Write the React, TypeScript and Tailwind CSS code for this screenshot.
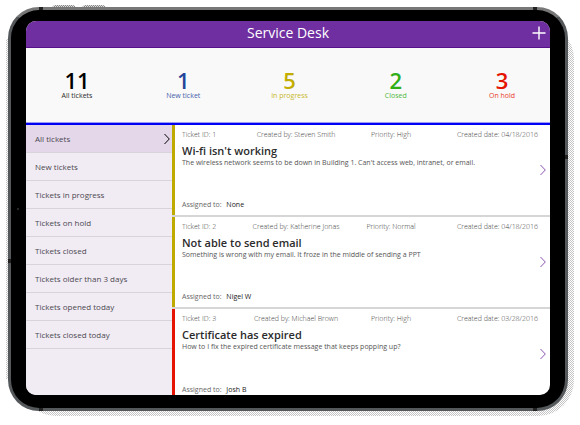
import React from 'react';

interface Stat {
  count: number;
  label: string;
  color: string;
}

interface Ticket {
  id: number;
  createdBy: string;
  priority: string;
  date: string;
  title: string;
  description: string;
  assignedTo: string;
  bar: string;
}

const stats: Stat[] = [
  { count: 11, label: 'All tickets', color: 'text-black' },
  { count: 1, label: 'New ticket', color: 'text-[#25459a]' },
  { count: 5, label: 'In progress', color: 'text-[#c2ad00]' },
  { count: 2, label: 'Closed', color: 'text-[#2fae16]' },
  { count: 3, label: 'On hold', color: 'text-[#e51400]' },
];

const filters = [
  'All tickets',
  'New tickets',
  'Tickets in progress',
  'Tickets on hold',
  'Tickets closed',
  'Tickets older than 3 days',
  'Tickets opened today',
  'Tickets closed today',
];

const tickets: Ticket[] = [
  {
    id: 1,
    createdBy: 'Steven Smith',
    priority: 'High',
    date: '04/18/2016',
    title: "Wi-fi isn't working",
    description: "The wireless network seems to be down in Building 1. Can't access web, intranet, or email.",
    assignedTo: 'None',
    bar: 'bg-[#bfab00]',
  },
  {
    id: 2,
    createdBy: 'Katherine Jonas',
    priority: 'Normal',
    date: '04/18/2016',
    title: 'Not able to send email',
    description: 'Something is wrong with my email. It froze in the middle of sending a PPT',
    assignedTo: 'Nigel W',
    bar: 'bg-[#bfab00]',
  },
  {
    id: 3,
    createdBy: 'Michael Brown',
    priority: 'High',
    date: '03/28/2016',
    title: 'Certificate has expired',
    description: 'How to I fix the expired certificate message that keeps popping up?',
    assignedTo: 'Josh B',
    bar: 'bg-[#e51400]',
  },
];

const Chevron: React.FC<{ className?: string }> = ({ className }) => (
  <svg viewBox="0 0 6 12" fill="none" stroke="currentColor" className={className} aria-hidden="true">
    <path d="M0.5 1 L5.3 6 L0.5 11" />
  </svg>
);

const Header: React.FC = () => (
  <header className="grid grid-cols-[1fr_auto_1fr] items-center h-[27px] shrink-0 pb-[3px] border-b border-[#57108c] bg-[#6f2fa0] text-white">
    <h1 className="col-start-2 text-[14px] leading-[20px]">Service Desk</h1>
    <button type="button" aria-label="New ticket" className="justify-self-end mr-1">
      <svg viewBox="0 0 14 14" fill="none" stroke="currentColor" className="block w-[14px] h-[14px]">
        <path d="M7 0.5 V13.5 M0.5 7 H13.5" strokeWidth="1.4" />
      </svg>
    </button>
  </header>
);

const Stats: React.FC = () => (
  <section className="flex justify-between items-start h-[74px] shrink-0 pt-5 pl-[3px] bg-[#f9f9f9]">
    {stats.map((stat) => (
      <div key={stat.label} className={`w-24 text-center ${stat.color}`}>
        <div className="text-[22px] leading-[24px] font-semibold">{stat.count}</div>
        <div className="text-[7px] leading-[8px] opacity-85">{stat.label}</div>
      </div>
    ))}
  </section>
);

const Sidebar: React.FC = () => (
  <nav className="w-[146px] shrink-0 bg-[#f1ecf4]">
    {filters.map((filter, i) => (
      <button
        key={filter}
        type="button"
        className={`flex w-full h-7 items-center justify-between pl-[9px] pr-[2px] border-b border-[#d6d3d9] text-[8px] leading-[12px] text-[#4c4850] ${
          i === 0 ? 'bg-[#e4d7ea]' : ''
        }`}
      >
        {filter}
        {i === 0 && <Chevron className="w-[6px] h-[12px] text-black" />}
      </button>
    ))}
  </nav>
);

const TicketRow: React.FC<{ ticket: Ticket }> = ({ ticket }) => (
  <li className="flex h-[92px] last:h-[93px] border-b-2 border-[#d6d6d6]">
    <div className={`w-[3px] shrink-0 ${ticket.bar}`} />
    <article className="relative flex flex-1 flex-col pt-[5px] pl-[7px] pr-3">
      <div className="grid grid-cols-[64fr_100fr_90fr_102fr] text-[7px] leading-[10px] font-light text-[#444] whitespace-nowrap">
        <span>Ticket ID: {ticket.id}</span>
        <span className="text-center">Created by: {ticket.createdBy}</span>
        <span className="text-center">Priority: {ticket.priority}</span>
        <span className="text-right">Created date: {ticket.date}</span>
      </div>
      <h2 className="mt-[3px] text-[11px] leading-[16px] font-semibold text-[#2b2b2b]">{ticket.title}</h2>
      <p className="text-[7px] leading-[8px] text-[#555]">{ticket.description}</p>
      <p className="mt-auto mb-[5px] text-[7px] leading-[10px] text-[#666]">
        Assigned to: <span className="ml-[3px] font-medium text-[#222]">{ticket.assignedTo}</span>
      </p>
      <button type="button" aria-label={`Open ticket ${ticket.id}`} className="absolute right-1 top-[39px]">
        <Chevron className="block w-[6px] h-[12px] text-[#8a55b5]" />
      </button>
    </article>
  </li>
);

const App: React.FC = () => (
  <div className="bg-white pt-[7px] pl-2 pr-3 pb-[14px] font-['Open_Sans','Noto_Sans',sans-serif]">
    <div className="relative">
      {/* Dotted shadow and side buttons of the tablet */}
      <div className="absolute top-4 -bottom-[5px] left-3 -right-[6px] rounded-[36px] bg-[repeating-conic-gradient(#c4c4c4_0_25%,#fff_0_50%)] bg-[size:2px_2px]" />
      <div className="absolute top-8 bottom-8 -left-[2px] w-2 bg-[repeating-conic-gradient(#c4c4c4_0_25%,#fff_0_50%)] bg-[size:2px_2px]" />
      <div className="absolute -top-[2px] left-11 w-6 h-1 rounded-t bg-[repeating-conic-gradient(#888_0_25%,#ddd_0_50%)] bg-[size:2px_2px]" />
      <div className="absolute -top-[2px] left-[74px] w-6 h-1 rounded-t bg-[repeating-conic-gradient(#888_0_25%,#ddd_0_50%)] bg-[size:2px_2px]" />

      {/* Tablet body */}
      <div className="relative rounded-[31px] border-[3px] border-[#55585a] border-t-[#777] bg-black pt-[11px] px-[15px] pb-[13px]">
        <div className="flex h-[374px] flex-col overflow-hidden rounded-[10px] bg-white">
          <Header />
          <Stats />
          <div className="h-[3px] shrink-0 border-t border-[#9c9cf5] bg-[#0000f5]" />
          <main className="flex min-h-0 flex-1">
            <Sidebar />
            <ul className="flex-1">
              {tickets.map((ticket) => (
                <TicketRow key={ticket.id} ticket={ticket} />
              ))}
            </ul>
          </main>
        </div>

        {/* Antenna bands and camera */}
        <i className="absolute -top-[3px] left-7 w-1 h-[3px] bg-[#222]" />
        <i className="absolute -top-[3px] right-7 w-1 h-[3px] bg-[#222]" />
        <i className="absolute -bottom-[3px] left-7 w-1 h-[3px] bg-[#222]" />
        <i className="absolute -bottom-[3px] right-7 w-1 h-[3px] bg-[#222]" />
        <i className="absolute top-[249px] -left-[3px] w-[3px] h-1 bg-[#222]" />
        <i className="absolute top-[145px] -right-[3px] w-[3px] h-1 bg-[#222]" />
        <i className="absolute top-[198px] left-[6px] size-[2px] rounded-full bg-[#333]" />
      </div>
    </div>
  </div>
);

export default App;
